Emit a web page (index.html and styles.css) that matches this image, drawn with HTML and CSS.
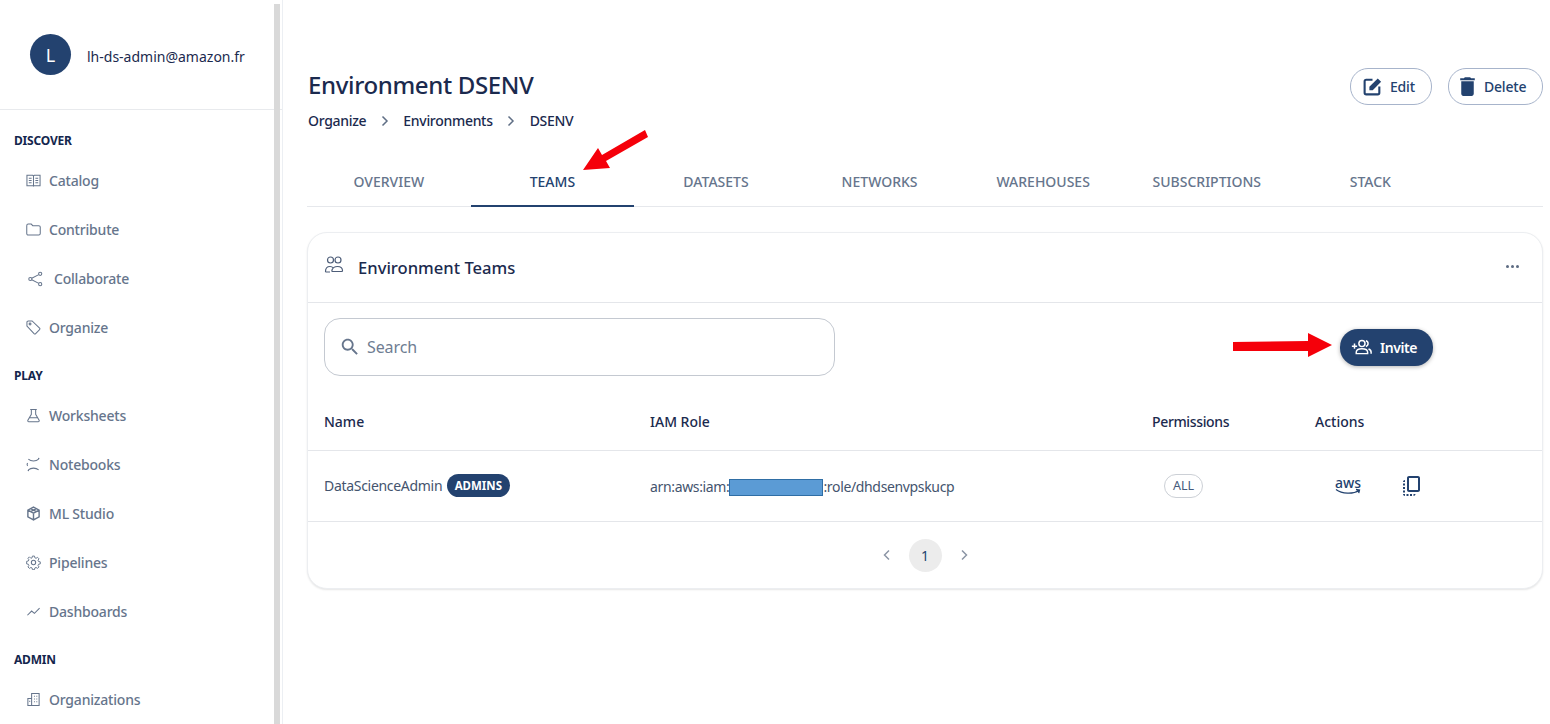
FILE: index.html
```html
<!DOCTYPE html>
<html lang="en">
<head>
  <meta charset="UTF-8" />
  <meta name="viewport" content="width=device-width, initial-scale=1.0"/>
  <title>Environment DSENV</title>
  <link rel="stylesheet" href="styles.css">
</head>
<body>
  <div class="app">
    <aside class="sidebar">
      <div class="scrollbar"></div>
      <div class="user">
        <div class="avatar">L</div>
        <span class="user-email">lh-ds-admin@amazon.fr</span>
      </div>
      <nav class="nav">
        <div class="nav-label">DISCOVER</div>
        <a class="nav-item">
          <svg class="nav-icon" viewBox="0 0 16 16"><path d="M1 2.500h6.200l.8.600.8-.600H15v11H8.800l-.8.500-.8-.500H1zM8 3.100v10.900M3 5.500h3M3 8h3M3 10.500h3M10 5.500h3M10 8h3M10 10.500h3"/></svg>
          Catalog
        </a>
        <a class="nav-item">
          <svg class="nav-icon" viewBox="0 0 16 16"><path d="M.8 4C.8 2.800 1.500 2.200 2.400 2.200h3.200l1.600 1.700h6.400c1 0 1.600.6 1.600 1.500v6.800c0 1-.6 1.600-1.600 1.600H2.400c-1 0-1.600-.6-1.600-1.600z"/></svg>
          Contribute
        </a>
        <a class="nav-item nav-item-wide">
          <svg class="nav-icon" viewBox="0 0 16 16"><circle cx="13" cy="2.500" r="1.700"/><circle cx="2.500" cy="8" r="1.700"/><circle cx="13" cy="13.500" r="1.700"/><path d="M11.500 3.300 4 7.200M4 8.800l7.500 3.900"/></svg>
          Collaborate
        </a>
        <a class="nav-item">
          <svg class="nav-icon" viewBox="0 0 16 16"><path d="M1 2.500C1 1.600 1.600 1 2.500 1h4l8 7.600c.5.500.5 1.200 0 1.700l-4.200 4.200c-.5.500-1.200.5-1.700 0L1 6.500z"/><circle cx="4.300" cy="4.300" r="1"/></svg>
          Organize
        </a>

        <div class="nav-label nav-label-next">PLAY</div>
        <a class="nav-item">
          <svg class="nav-icon" viewBox="0 0 16 16"><path d="M4.500 1.500h7M5.700 1.500v5.300L2 13c-.4.800.1 1.600 1 1.600h10c.9 0 1.400-.8 1-1.600l-3.700-6.200V1.500M4 10.500h8"/></svg>
          Worksheets
        </a>
        <a class="nav-item">
          <svg class="nav-icon" viewBox="0 0 16 16"><path d="M2.500 2.200C5.500 4.800 10.500 4.800 13.500 2.200M2.500 13.800C5.500 11.200 10.500 11.200 13.500 13.800M1.800 6.500C1 7.500 1 8.500 1.800 9.500"/><circle class="dot" cx="13.500" cy="1.500" r=".8"/><circle class="dot" cx="2.500" cy="14.500" r=".8"/></svg>
          Notebooks
        </a>
        <a class="nav-item">
          <svg class="nav-icon nav-icon-bold" viewBox="0 0 16 16"><path d="M8 1.200 14 4.400v7.200L8 14.800 2 11.600V4.400zM2 4.400l6 3.300 6-3.300M8 7.700v7.100M5 2.800l6 3.300M11 2.800 5 6.100"/></svg>
          ML Studio
        </a>
        <a class="nav-item">
          <svg class="nav-icon" viewBox="0 0 16 16"><circle cx="8" cy="8" r="2.300"/><path d="M6.800 .8h2.400l.4 2 1.400.6 1.700-1.100 1.700 1.700-1.100 1.700.6 1.400 2 .4v2.400l-2 .4-.6 1.400 1.100 1.700-1.700 1.700-1.700-1.100-1.400.6-.4 2H6.800l-.4-2-1.400-.6-1.700 1.100-1.700-1.700 1.100-1.700-.6-1.400-2-.4V6.900l2-.4.6-1.400-1.100-1.700 1.700-1.700L5 3.400l1.400-.6z" transform="translate(.6 .4) scale(.92)"/></svg>
          Pipelines
        </a>
        <a class="nav-item">
          <svg class="nav-icon" viewBox="0 0 16 16"><path d="M1.500 12 6 7.500l3 2.500 5.500-5.500"/></svg>
          Dashboards
        </a>

        <div class="nav-label nav-label-next">ADMIN</div>
        <a class="nav-item">
          <svg class="nav-icon" viewBox="0 0 16 16"><path d="M6 14.500V1.500h8v13zM6 7H2v7.500h4M8.500 4.500h1M11 4.500h1M8.500 7.500h1M11 7.500h1M8.500 10.500h1M11 10.500h1M3.500 10h1"/></svg>
          Organizations
        </a>
      </nav>
    </aside>

    <main class="main">
      <div class="page-head">
        <div>
          <h1 class="page-title">Environment DSENV</h1>
          <div class="breadcrumbs">
            <span>Organize</span>
            <svg class="crumb-sep" viewBox="0 0 10 12"><path d="M2.500 1.500 7 6l-4.500 4.500"/></svg>
            <span>Environments</span>
            <svg class="crumb-sep" viewBox="0 0 10 12"><path d="M2.500 1.500 7 6l-4.500 4.500"/></svg>
            <span>DSENV</span>
          </div>
        </div>
        <div class="page-actions">
          <button class="btn-outline btn-edit">
            <svg class="btn-icon" viewBox="0 0 20 20"><path class="edit-box" d="M10 3.500H4a1.500 1.500 0 0 0-1.500 1.500v11A1.500 1.500 0 0 0 4 17.500h11a1.500 1.500 0 0 0 1.500-1.500v-6"/><path d="M7 13.500v-3.200l8-8 3.200 3.200-8 8z"/></svg>
            Edit
          </button>
          <button class="btn-outline btn-delete">
            <svg class="btn-icon" viewBox="0 0 24 24"><path d="M6 19c0 1.100.9 2 2 2h8c1.100 0 2-.9 2-2V7H6v12zM19 4h-3.500l-1-1h-5l-1 1H5v2h14V4z"/></svg>
            Delete
          </button>
        </div>
      </div>

      <div class="tabs">
        <div class="tab">OVERVIEW</div>
        <div class="tab tab-active">TEAMS</div>
        <div class="tab">DATASETS</div>
        <div class="tab">NETWORKS</div>
        <div class="tab">WAREHOUSES</div>
        <div class="tab">SUBSCRIPTIONS</div>
        <div class="tab">STACK</div>
      </div>

      <section class="card">
        <div class="card-head">
          <div class="card-title">
            <svg class="card-icon" viewBox="0 0 20 20"><circle cx="6.500" cy="5" r="3"/><circle cx="14" cy="5" r="3"/><path d="M1.500 16.500c0-3 1.800-5 4.500-5 1.500 0 2.500.5 3.300 1.500M8 15c.7-2.200 3-3.500 5.500-3.500 3 0 5 1.700 5 4.300 0 .5-.3.700-.7.700H8.500c-.6 0-.7-.6-.5-1.500zM1.500 16.500c0 .4.200.5.600.5H6"/></svg>
            <span>Environment Teams</span>
          </div>
          <div class="more"><i></i><i></i><i></i></div>
        </div>

        <div class="toolbar">
          <div class="search">
            <svg class="search-icon" viewBox="0 0 24 24"><path d="M15.500 14h-.79l-.28-.27C15.410 12.590 16 11.110 16 9.500 16 5.910 13.090 3 9.500 3S3 5.910 3 9.500 5.910 16 9.500 16c1.610 0 3.090-.59 4.230-1.570l.27.28v.79l5 4.990L20.490 19l-4.990-5zm-6 0C7.010 14 5 11.990 5 9.500S7.010 5 9.500 5 14 7.010 14 9.500 11.990 14 9.500 14z"/></svg>
            <span class="search-text">Search</span>
          </div>
          <button class="btn-primary">
            <svg class="invite-icon" viewBox="0 0 24 24"><path d="M1 10.500h6M4 7.500v6"/><circle cx="12.500" cy="7.500" r="3.500"/><path d="M6 19v-1.500c0-2.500 3-4 6.500-4s6.500 1.500 6.500 4V19zM17 4.200c1.500.4 2.500 1.700 2.500 3.300s-1 2.900-2.500 3.300M20 13.800c2 .6 3 1.800 3 3.500V19"/></svg>
            Invite
          </button>
        </div>

        <div class="row row-head">
          <div>Name</div>
          <div>IAM Role</div>
          <div class="head-narrow">Permissions</div>
          <div>Actions</div>
        </div>
        <div class="row row-body">
          <div class="cell-name">DataScienceAdmin <span class="badge">ADMINS</span></div>
          <div class="cell-role">arn:aws:iam:<span class="redacted"></span>:role/dhdsenvpskucp</div>
          <div><span class="chip">ALL</span></div>
          <div class="cell-actions">
            <span class="aws">
              <span class="aws-text">aws</span>
              <svg class="aws-smile" viewBox="0 0 26 7"><path d="M1 1.500C7 6 18 6.500 24 2.500M21 1.500l3.500.5-.8 3.200"/></svg>
            </span>
            <svg class="copy-icon" viewBox="0 0 24 24"><path d="M18 2H9c-1.100 0-2 .9-2 2v12c0 1.100.9 2 2 2h9c1.100 0 2-.9 2-2V4c0-1.100-.9-2-2-2zm0 14H9V4h9v12zM3 15v-2h2v2H3zm0-5.500h2v2H3v-2zM10 20h2v2h-2v-2zm-7-1.500v-2h2v2H3zM5 22c-1.100 0-2-.9-2-2h2v2zm3.500 0h-2v-2h2v2zm5 0v-2h2c0 1.100-.9 2-2 2zM5 6v2H3c0-1.100.9-2 2-2z"/></svg>
          </div>
        </div>

        <div class="pagination">
          <svg class="page-arrow" viewBox="0 0 10 12"><path d="M7 1.500 2.500 6 7 10.500"/></svg>
          <span class="page-num">1</span>
          <svg class="page-arrow" viewBox="0 0 10 12"><path d="M3 1.500 7.500 6 3 10.500"/></svg>
        </div>
      </section>
    </main>
  </div>

  <!-- red arrows drawn over the page -->
  <svg class="annotations" viewBox="0 0 1550 724">
    <polygon points="645,130 648,137 606,161 610,168 583,170 598,148 602,155"/>
    <polygon points="1233,342 1308,341 1308,333 1332,345 1308,357 1308,351 1233,351"/>
  </svg>
</body>
</html>
```

FILE: styles.css
```css
* {
  box-sizing: border-box;
}

html, body {
  height: 100%;
}

body {
  margin: 0;
  background: #fff;
  color: #1b2a4e;
  font-family: "Noto Sans", "Open Sans", sans-serif;
  overflow: hidden;
}

.app {
  display: flex;
  height: 724px;
  overflow: hidden;
}

/* Sidebar */
.sidebar {
  position: relative;
  flex: 0 0 283px;
  height: 100%;
  border-right: 1px solid #eceff3;
  overflow: hidden;
}

.scrollbar {
  position: absolute;
  top: 4px;
  bottom: 0;
  left: 274px;
  width: 6px;
  background: #d9d9d9;
}

.user {
  display: flex;
  align-items: center;
  gap: 16px;
  height: 110px;
  padding-left: 30px;
  border-bottom: 1px solid #e8eaed;
}

.avatar {
  display: flex;
  align-items: center;
  justify-content: center;
  width: 41px;
  height: 41px;
  border-radius: 50%;
  background: #23426f;
  color: #fff;
  font-size: 18px;
}

.user-email {
  margin-top: 3px;
  font-size: 14px;
  color: #1b2a4e;
}

.nav {
  padding-top: 15px;
}

.nav-label {
  display: flex;
  align-items: center;
  height: 31px;
  padding-left: 14px;
  font-size: 12px;
  font-weight: 700;
  letter-spacing: -0.200px;
  color: #14264d;
}

.nav-label-next {
  margin-top: 8px;
}

.nav-item {
  display: flex;
  align-items: center;
  gap: 8px;
  height: 49px;
  padding-left: 26px;
  font-size: 14px;
  font-weight: 500;
  letter-spacing: -0.200px;
  color: #66758c;
}

.nav-item-wide {
  gap: 11px;
  padding-left: 28px;
}

.nav-icon {
  flex: none;
  width: 15px;
  height: 15px;
  fill: none;
  stroke: #66758c;
  stroke-width: 1.100;
}

.nav-item-wide .nav-icon {
  width: 15px;
  height: 16px;
}

.nav-icon-bold {
  stroke-width: 1.500;
}

.nav-icon .dot {
  fill: #66758c;
  stroke: none;
}

/* Main column */
.main {
  flex: 1;
  min-width: 0;
  padding: 69px 7px 0 24px;
}

.page-head {
  display: flex;
  justify-content: space-between;
  align-items: flex-start;
  padding-left: 1px;
}

.page-title {
  margin: 0;
  font-size: 24px;
  line-height: 32px;
  font-weight: 500;
  letter-spacing: -0.350px;
  color: #1b2a4e;
}

.breadcrumbs {
  display: flex;
  align-items: center;
  gap: 13.500px;
  margin-top: 9px;
  font-size: 14px;
  line-height: 22px;
  font-weight: 500;
  letter-spacing: -0.300px;
  color: #1b2a4e;
}

.crumb-sep {
  width: 10px;
  height: 12px;
  fill: none;
  stroke: #5f6e85;
  stroke-width: 1.500;
}

.page-actions {
  display: flex;
  gap: 16px;
  margin-top: -1px;
}

.btn-outline {
  display: flex;
  align-items: center;
  height: 37px;
  border: 1px solid #a7b4cb;
  border-radius: 18px;
  background: #fff;
  color: #23426f;
  font: 500 14px "Noto Sans", sans-serif;
  letter-spacing: -0.200px;
}

.btn-edit {
  gap: 7px;
  width: 82px;
  padding: 0 0 0 11px;
}

.btn-delete {
  gap: 4px;
  width: 95px;
  padding: 0 0 0 6px;
}

.btn-icon {
  flex: none;
  width: 25px;
  height: 25px;
  fill: #23426f;
}

.btn-edit .btn-icon {
  width: 21px;
  height: 21px;
}

.edit-box {
  fill: none;
  stroke: #23426f;
  stroke-width: 2;
}

/* Tabs */
.tabs {
  display: grid;
  grid-template-columns: repeat(7, 163.600px);
  height: 49px;
  margin-top: 26px;
  border-bottom: 1px solid #e6e8ec;
}

.tab {
  display: flex;
  align-items: center;
  justify-content: center;
  height: 48px;
  padding-bottom: 2px;
  font-size: 14px;
  font-weight: 500;
  color: #66758c;
}

.tab-active {
  height: 49px;
  padding-bottom: 1px;
  border-bottom: 2px solid #23426f;
  color: #23426f;
}

/* Card */
.card {
  margin-top: 25px;
  height: 357px;
  border: 1px solid #eceef1;
  border-radius: 20px;
  box-shadow: 0 1px 2px rgba(0,0,0,0.1);
  background: #fff;
}

.card-head {
  display: flex;
  align-items: center;
  justify-content: space-between;
  height: 70px;
  padding: 0 23px 0 16px;
  border-bottom: 1px solid #e4e6ea;
}

.card-title {
  display: flex;
  align-items: center;
  gap: 14px;
  font-size: 16.600px;
  font-weight: 500;
  color: #1b2a4e;
}

.card-icon {
  width: 20px;
  height: 20px;
  margin-top: -5px;
  fill: none;
  stroke: #4d5d78;
  stroke-width: 1.200;
}

.more {
  display: flex;
  gap: 2px;
  margin-top: -2px;
}

.more i {
  width: 3px;
  height: 3px;
  border-radius: 50%;
  background: #5d6b82;
}

.toolbar {
  display: flex;
  align-items: center;
  justify-content: space-between;
  height: 90px;
  padding: 0 109px 0 16px;
}

.search {
  display: flex;
  align-items: center;
  gap: 6px;
  width: 511px;
  height: 58px;
  margin-bottom: 2px;
  padding-left: 14px;
  border: 1px solid #c4c9d1;
  border-radius: 16px;
}

.search-icon {
  width: 22px;
  height: 22px;
  margin-top: -1px;
  fill: #66758c;
}

.search-text {
  font-size: 16px;
  letter-spacing: -0.100px;
  color: #6f7d92;
}

.btn-primary {
  display: flex;
  align-items: center;
  gap: 8px;
  width: 93px;
  height: 37px;
  margin-bottom: 2px;
  padding: 0 0 0 11px;
  border: 0;
  border-radius: 18px;
  background: #23426f;
  box-shadow: 0 1px 4px rgba(0,0,0,0.3);
  color: #fff;
  font: 600 14px "Noto Sans", sans-serif;
  letter-spacing: -0.450px;
}

.invite-icon {
  flex: none;
  width: 21px;
  height: 21px;
  fill: none;
  stroke: #fff;
  stroke-width: 1.700;
}

/* Table */
.row {
  display: grid;
  grid-template-columns: 326px 502px 163px 1fr;
  align-items: center;
  padding-left: 16px;
  border-bottom: 1px solid #e4e6ea;
}

.row-head {
  height: 58px;
  font-size: 14px;
  font-weight: 500;
  color: #1b2a4e;
}

.head-narrow {
  letter-spacing: -0.350px;
}

.row-body {
  height: 71px;
  font-size: 14px;
  color: #44546e;
}

.cell-name {
  margin-top: -2px;
  letter-spacing: -0.300px;
}

.badge {
  display: inline-block;
  margin-left: 1px;
  padding: 0 8px;
  border-radius: 12px;
  background: #23426f;
  color: #fff;
  font-size: 11.500px;
  font-weight: 700;
  line-height: 23px;
  letter-spacing: 0;
  vertical-align: 1px;
}

.cell-role {
  letter-spacing: -0.350px;
}

.redacted {
  display: inline-block;
  width: 94px;
  height: 17px;
  border: 1px solid #2f6ea5;
  background: #5b9bd5;
  vertical-align: -4px;
}

.chip {
  display: inline-block;
  margin-left: 12px;
  padding: 0 8px;
  border: 1px solid #ccd0d6;
  border-radius: 12px;
  color: #44597a;
  font-size: 12.500px;
  line-height: 22px;
}

.cell-actions {
  display: flex;
  align-items: center;
  padding-left: 20px;
}

.aws {
  display: flex;
  flex-direction: column;
  align-items: center;
  width: 26px;
}

.aws-text {
  color: #23426f;
  font-size: 14px;
  line-height: 11px;
  font-weight: 500;
}

.aws-smile {
  width: 26px;
  height: 7px;
  fill: none;
  stroke: #23426f;
  stroke-width: 1.300;
}

.copy-icon {
  width: 24px;
  height: 24px;
  margin-left: 39px;
  fill: #23426f;
}

/* Pagination */
.pagination {
  display: flex;
  align-items: center;
  justify-content: center;
  gap: 17px;
  height: 66px;
}

.page-arrow {
  width: 10px;
  height: 12px;
  fill: none;
  stroke: #8b95a5;
  stroke-width: 1.500;
}

.page-num {
  display: flex;
  align-items: center;
  justify-content: center;
  width: 33px;
  height: 33px;
  border-radius: 50%;
  background: #ececec;
  color: #23426f;
  font-size: 14px;
}

.annotations {
  position: absolute;
  top: 0;
  left: 0;
  width: 1550px;
  height: 724px;
  fill: #f5000a;
  pointer-events: none;
}
```
